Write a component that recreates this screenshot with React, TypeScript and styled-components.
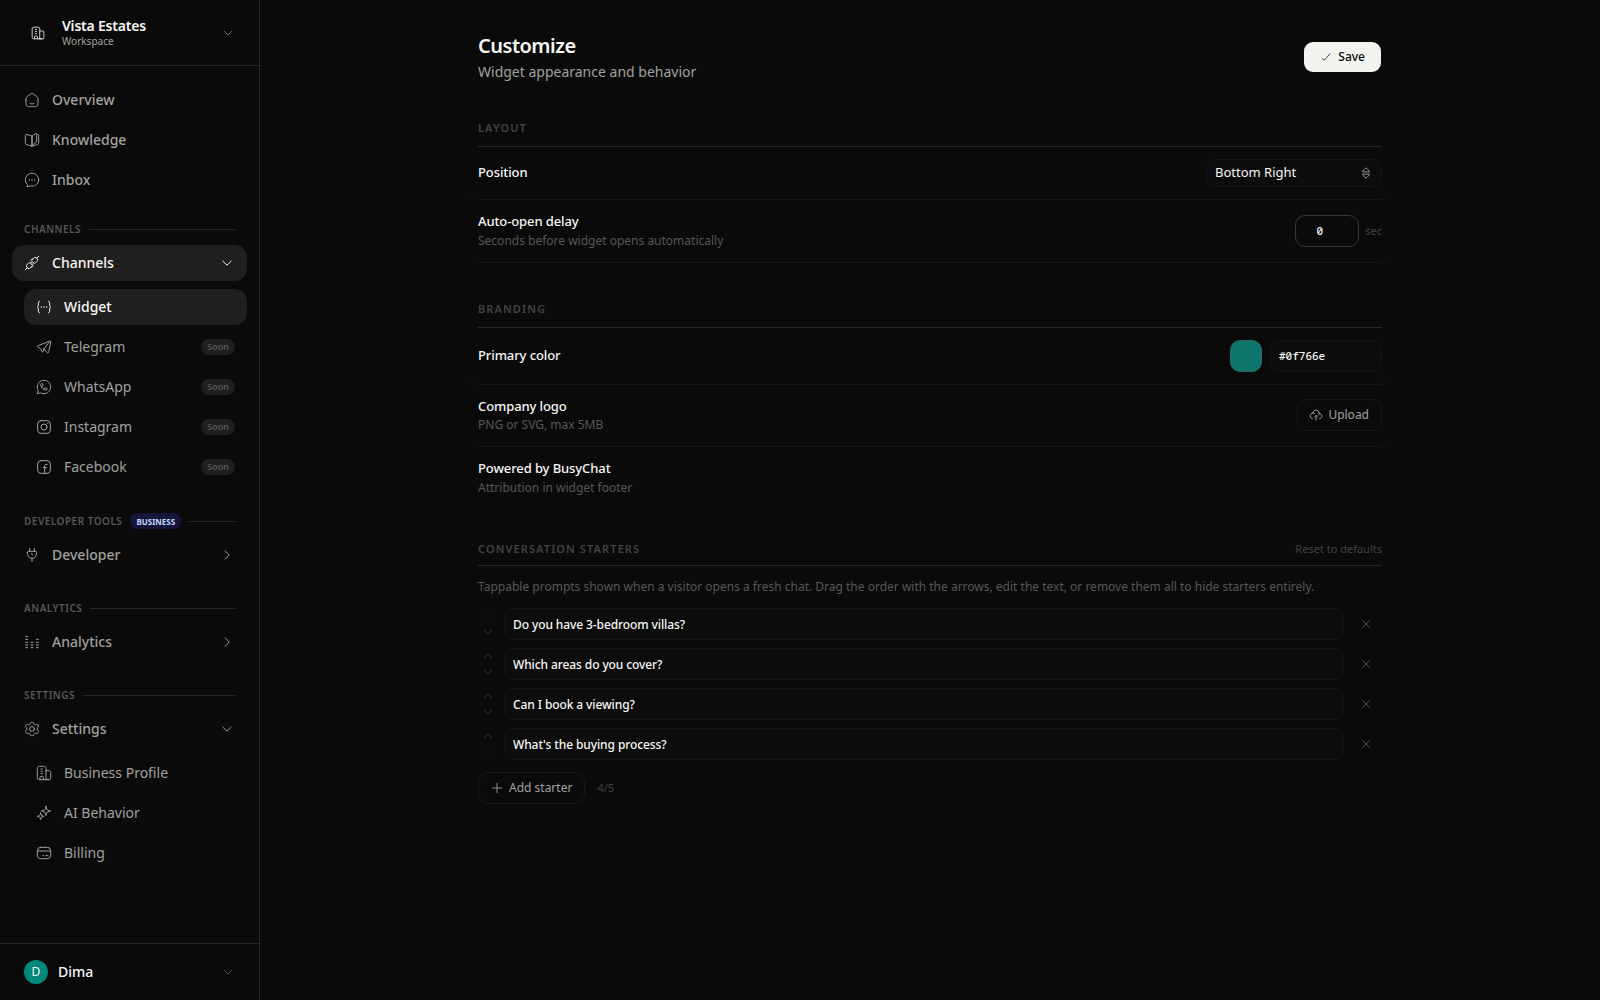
import React from "react";
import styled, { createGlobalStyle, css } from "styled-components";

const c = {
  bg: "#0a0a0a",
  line: "#262626",
  faint: "#141414",
  active: "#1f1f1f",
  text: "#f7f7f4",
  muted: "#a1a19f",
  dim: "#575756",
  dimmer: "#434242",
};

const GlobalStyle = createGlobalStyle`
  *, *::before, *::after { box-sizing: border-box; }
  body {
    margin: 0;
    background: ${c.bg};
    color: ${c.text};
    font-family: "Noto Sans", sans-serif;
  }
  button, input { font: inherit; color: inherit; margin: 0; }
`;

/* ---------- icons ---------- */

const Svg = styled.svg<{ $size: number }>`
  display: block;
  flex: none;
  width: ${(p) => p.$size}px;
  height: ${(p) => p.$size}px;
  fill: none;
  stroke: currentColor;
  stroke-width: 1.5;
  stroke-linecap: round;
  stroke-linejoin: round;
`;

const shapes = {
  home: (
    <>
      <path d="M3 11.99V14.5c0 3.54 0 5.3 1.17 6.4C5.34 22 7.23 22 11 22h2c3.77 0 5.66 0 6.83-1.1C21 19.8 21 18.04 21 14.5v-2.51c0-1.8 0-2.7-.38-3.49-.38-.78-1.09-1.33-2.51-2.44l-2-1.55C13.9 2.84 12.8 2 11.99 2s-1.9.84-4.1 2.51l-2 1.55C4.47 7.17 3.76 7.72 3.38 8.5 3 9.29 3 10.19 3 11.99Z" />
      <path d="M15 17c-.8.62-1.85 1-3 1s-2.2-.38-3-1" />
    </>
  ),
  book: (
    <>
      <path d="M12 6.3v15M5.33 4.03C8.08 4.6 9.86 5.5 12 6.3V21.3c-2.1-.8-4-1.5-6.6-2.05C3.7 18.9 2.9 18.8 2.4 18.1 2 17.5 2 16.8 2 15.3V7c0-1.6 0-2.4.63-2.87.7-.5 1.35-.37 2.7-.1Z" />
      <path d="M12 21.3c2.1-.8 4-1.5 6.6-2.05 1.7-.35 2.5-.45 3-1.15.4-.6.4-1.3.4-2.8V7c0-1.6 0-2.4-.63-2.87-.4-.3-.8-.38-1.37-.33" />
      <path d="M12 6.3c1.2-.5 2.7-2.1 4.6-3.6.9-.7 1.4-1 1.9-.7.5.2.5.8.5 1.8v9.6c0 .9 0 1.4-.2 1.7-.3.4-1.1.7-2.3 1.4-1.6.9-3.5 2.8-4.5 4.5" />
    </>
  ),
  chat: (
    <>
      <path d="M22 11.57c0 5.28-4.48 9.57-10 9.57-.65 0-1.3-.06-1.94-.18-.46-.09-.69-.13-.85-.1-.16.02-.39.14-.84.38a6.6 6.6 0 0 1-4.24.67 5.4 5.4 0 0 0 1.1-2.38c.1-.54-.15-1.06-.53-1.44A9.3 9.3 0 0 1 2 11.57C2 6.29 6.48 2 12 2s10 4.29 10 9.57Z" />
      <path d="M12 12h.01M16 12h.01M8 12h.01" strokeWidth="2" />
    </>
  ),
  building: (
    <>
      <path d="M15 22V7c0-2.360 0-3.540-.730-4.270C13.540 2 12.360 2 10 2H7c-2.360 0-3.540 0-4.270.730C2 3.460 2 4.640 2 7v10c0 2.360 0 3.540.730 4.270C3.460 22 4.640 22 7 22h12" />
      <path d="M15 8.500h3c1.890 0 2.830 0 3.410.590.590.580.590 1.520.590 3.410v5.500c0 1.890 0 2.830-.590 3.410-.580.590-1.520.590-3.410.590h-3" />
      <path d="M7.500 6h2M7.500 9.500h2M7.500 13h2M6 22v-3.500c0-.900.600-1.500 1.500-1.500h2c.900 0 1.500.600 1.500 1.500V22" />
    </>
  ),
  plugs: (
    <>
      <path d="M13.2 6.1c1.6-1.6 2.4-2.4 3.4-2.5 1.3-.1 2.3.9 2.8 1.4.5.5 1.1 1.5 1 2.6-.1 1.1-.9 1.9-2.5 3.5l-1 1c-.6.6-.9.8-1.2.8-.3 0-.6-.2-1.2-.8l-3.2-3.2c-.6-.6-.8-.9-.8-1.2 0-.3.2-.6.8-1.2l1.9-.4Z" />
      <path d="M10.800 17.900c-1.600 1.600-2.400 2.400-3.400 2.500-1.300.100-2.300-.900-2.800-1.400-.500-.500-1.100-1.500-1-2.600.100-1.100.900-1.900 2.500-3.500l1-1c.600-.600.900-.800 1.200-.800.300 0 .600.200 1.200.800l3.200 3.200c.600.600.800.900.800 1.200 0 .300-.200.600-.800 1.200l-1.900.400Z" />
      <path d="M19.300 4.700 22 2M2 22l2.700-2.700M9.500 12.500l1.700-1.700M11.700 14.700l1.700-1.700" />
    </>
  ),
  braces: (
    <>
      <path d="M18.500 20.500c1.500 0 2-1 2-2.500v-3.200c0-1.300.3-2.200 1.500-2.800-1.200-.6-1.500-1.500-1.500-2.800V6c0-1.500-.500-2.500-2-2.500M5.500 20.500c-1.500 0-2-1-2-2.500v-3.200c0-1.300-.3-2.200-1.500-2.800 1.200-.6 1.500-1.500 1.500-2.800V6C3.500 4.500 4 3.500 5.500 3.500" />
      <path d="M8 12h.01M12 12h.01M16 12h.01" strokeWidth="2" />
    </>
  ),
  plane: (
    <path d="m11.990 14.990 2.900 3.400c1.500 1.900 2.300 2.800 3.100 2.500.8-.2 1-1.400 1.500-3.600l2.300-11.200c.3-1.700.5-2.500.1-2.900-.5-.4-1.200-.1-2.700.5L5.140 9.300C2.900 10.200 1.990 10.600 2 11.400c0 .9 1.200 1.200 3.500 1.900.6.200 1 .5 1.500 1.300l1.900 4.300c.4.800.7 1.100 1.200.6l1.890-4.510Zm0 0L20 4.500" />
  ),
  whatsapp: (
    <>
      <path d="M12 22c5.520 0 10-4.480 10-10S17.520 2 12 2 2 6.480 2 12c0 1.380.280 2.690.780 3.880.280.660.420.990.440 1.240.02.250-.06.520-.2 1.060L2 22l3.820-1.020c.540-.140.810-.220 1.060-.200.250.02.580.160 1.240.440 1.190.500 2.500.780 3.880.780Z" />
      <path d="m8.590 12.380.870-1.080c.370-.46.820-.89.860-1.500 0-.15-.1-.85-.31-2.250C9.920 7 9.410 7 8.970 7c-.57 0-.86 0-1.140.13-.36.160-.73.620-.81 1.010-.6.310-.2.520.070.940.410 1.740 1.330 3.460 2.690 4.820 1.360 1.360 3.080 2.290 4.820 2.690.430.090.640.140.940.070.390-.080.850-.45 1.020-.81.130-.28.130-.57.130-1.140 0-.44 0-.95-.55-1.040-1.400-.210-2.100-.310-2.250-.310-.610.040-1.040.490-1.500.860l-1.080.870" />
    </>
  ),
  instagram: (
    <>
      <rect x="2.500" y="2.500" width="19" height="19" rx="5" />
      <circle cx="12" cy="12" r="4.500" />
      <path d="M17.500 6.500h.01" strokeWidth="2" />
    </>
  ),
  facebook: (
    <>
      <rect x="2.500" y="2.500" width="19" height="19" rx="5" />
      <path d="M16.900 8.030h-1.900c-1.100 0-2 .9-2 2V21.500M11 13h5" />
    </>
  ),
  plug: (
    <path d="M8.500 2v4.500M15.500 2v4.500M12 17v5M5 8.500c0-1.400.6-2 2-2h10c1.400 0 2 .6 2 2 0 4.800-2.600 8.500-7 8.500s-7-3.700-7-8.500ZM11 10l2 1.500" />
  ),
  bars: (
    <path d="M2.500 20.500h3M2.500 16.500h3M2.500 12.500h3M2.500 8h3M2.500 3.500h3M10.500 20.500h3M10.500 16.500h3M10.500 12.500h3M18.500 20.500h3M18.500 16.500h3M18.500 12.500h3M18.500 8h3" />
  ),
  gear: (
    <>
      <path d="M21.320 7.140 20.820 6.280c-.37-.65-.56-.98-.88-1.110-.31-.130-.68-.030-1.400.180l-1.220.340a2.100 2.100 0 0 1-1.360-.170l-.34-.190a2 2 0 0 1-.79-.97l-.33-1c-.22-.66-.33-.99-.6-1.180-.26-.190-.6-.190-1.300-.190h-1.110c-.7 0-1.050 0-1.310.190-.26.190-.37.520-.59 1.180l-.34 1a2 2 0 0 1-.79.970l-.34.190c-.42.220-.9.280-1.360.170l-1.220-.34c-.72-.210-1.080-.310-1.400-.180-.310.130-.5.460-.87 1.110l-.5.860c-.35.610-.52.920-.49 1.240.3.320.27.590.73 1.110l1.030 1.150c.25.320.43.880.43 1.380s-.18 1.060-.43 1.380l-1.030 1.150c-.46.520-.7.780-.73 1.110-.3.320.14.630.49 1.240l.5.860c.37.650.56.980.87 1.110.320.130.68.030 1.400-.18l1.220-.34c.46-.110.940-.050 1.360.17l.34.190c.36.240.64.570.79.970l.34 1c.22.660.33.990.59 1.180.26.190.61.190 1.310.190h1.110c.7 0 1.040 0 1.300-.190.27-.19.380-.52.600-1.180l.33-1c.15-.4.430-.73.790-.97l.34-.19c.42-.22.900-.28 1.360-.17l1.220.34c.72.210 1.090.310 1.400.18.320-.13.510-.46.880-1.110l.5-.86c.34-.61.520-.92.480-1.240-.030-.33-.26-.59-.73-1.110l-1.030-1.150c-.25-.32-.43-.88-.43-1.380s.18-1.060.43-1.380l1.030-1.150c.47-.52.700-.79.730-1.110.040-.32-.14-.63-.48-1.240Z" />
      <circle cx="12" cy="12" r="3.500" />
    </>
  ),
  sparkles: (
    <>
      <path d="m15 2 .540 1.980c.480 1.770.720 2.650 1.370 3.300.640.640 1.530.880 3.290 1.360L22 9l-1.980.540c-1.770.480-2.650.720-3.300 1.370-.640.640-.880 1.530-1.360 3.290L15 16l-.540-1.980c-.480-1.770-.720-2.650-1.370-3.300-.640-.640-1.530-.880-3.290-1.360L8 9l1.980-.540c1.770-.480 2.650-.720 3.300-1.370.640-.640.880-1.530 1.360-3.290Z" />
      <path d="m7 12 .390 1.410c.340 1.270.510 1.900.970 2.360.460.460 1.090.630 2.360.980L12 17l-1.410.390c-1.270.340-1.900.510-2.360.970-.460.460-.630 1.090-.980 2.360L7 22l-.390-1.410c-.340-1.270-.510-1.900-.970-2.360-.460-.460-1.090-.630-2.360-.980L2 17l1.410-.390c1.270-.340 1.900-.510 2.360-.970.460-.460.630-1.090.980-2.360Z" />
    </>
  ),
  card: (
    <>
      <rect x="2" y="3.500" width="20" height="17" rx="5" />
      <path d="M10 16h1.500M14.500 16H18M2 9h20" />
    </>
  ),
  down: <path d="M18 9s-4.420 6-6 6-6-6-6-6" />,
  up: <path d="M18 15s-4.420-6-6-6-6 6-6 6" />,
  right: <path d="M9 6s6 4.420 6 6-6 6-6 6" />,
  check: <path d="m4 14.500 4.500 4L20 5.500" />,
  close: <path d="M18 6 6 18M6 6l12 12" />,
  plus: <path d="M12 4v16M4 12h16" />,
  upload: (
    <>
      <path d="M17.480 9.500h.02c2.490 0 4.500 2.020 4.500 4.510 0 2.320-1.750 4.230-4 4.490M17.480 9.500c.01-.160.020-.330.020-.500a5.500 5.500 0 0 0-10.980-.470M17.480 9.500a5.480 5.480 0 0 1-1.240 3M6.520 8.530A5 5 0 0 0 6 18.400M6.520 8.530a5 5 0 0 1 3.170.90" />
      <path d="M12 13v8M12 13c-.700 0-2.010 2-2.500 2.500M12 13c.700 0 2.010 2 2.500 2.500" />
    </>
  ),
  updown: (
    <path d="M18 9.500S14 3.500 12 3.500 6 9.500 6 9.500ZM6 14.500S10 20.500 12 20.500s6-6 6-6Z" />
  ),
};

type IconName = keyof typeof shapes;

function Icon({ name, size = 16 }: { name: IconName; size?: number }) {
  return (
    <Svg $size={size} viewBox="0 0 24 24" aria-hidden="true">
      {shapes[name]}
    </Svg>
  );
}

/* ---------- sidebar ---------- */

const Shell = styled.div`
  display: flex;
  height: 1000px;
  overflow: hidden;
`;

const Sidebar = styled.aside`
  display: flex;
  flex-direction: column;
  flex: none;
  width: 260px;
  border-right: 1px solid ${c.line};
`;

const Workspace = styled.header`
  display: flex;
  align-items: center;
  height: 66px;
  padding: 0 24px;
  border-bottom: 1px solid ${c.line};
`;

const WorkspaceIcon = styled.span`
  display: grid;
  place-items: center;
  width: 28px;
  height: 28px;
  margin-right: 10px;
  color: #f0f0ee;
`;

const WorkspaceText = styled.div`
  flex: 1;
`;

const WorkspaceName = styled.div`
  font-size: 14px;
  font-weight: 600;
  line-height: 18px;
  letter-spacing: -0.015em;
`;

const WorkspaceKind = styled.div`
  font-size: 10px;
  line-height: 13px;
  color: ${c.muted};
`;

const Tone = styled.span<{ $color: string }>`
  display: flex;
  color: ${(p) => p.$color};
`;

const Nav = styled.nav`
  display: flex;
  flex-direction: column;
  flex: 1;
  gap: 4px;
  padding: 16px 12px;
`;

const NavItem = styled.a<{ $active?: boolean; $nested?: boolean }>`
  display: flex;
  align-items: center;
  flex: none;
  gap: 12px;
  height: 36px;
  padding: 0 12px;
  margin-left: ${(p) => (p.$nested ? 12 : 0)}px;
  border-radius: 12px;
  font-size: 14px;
  font-weight: ${(p) => (p.$nested ? 400 : 500)};
  line-height: 20px;
  color: ${c.muted};
  ${(p) =>
    p.$active &&
    css`
      background: ${c.active};
      color: ${c.text};
      font-weight: 500;
    `}
`;

const NavText = styled.span`
  flex: 1;
`;

const SubNav = styled.div`
  display: flex;
  flex-direction: column;
  gap: 4px;
  margin-top: 4px;
`;

const Soon = styled.span`
  display: flex;
  align-items: center;
  height: 16px;
  padding: 0 6px;
  border-radius: 8px;
  background: ${c.active};
  color: ${c.dim};
  font-size: 9px;
  font-weight: 600;
`;

const GroupLabel = styled.div<{ $top: number }>`
  display: flex;
  align-items: center;
  flex: none;
  gap: 8px;
  height: 16px;
  margin: ${(p) => p.$top}px 12px 4px;
  font-size: 10px;
  font-weight: 600;
  letter-spacing: 0.05em;
  text-transform: uppercase;
  color: ${c.dim};
  &::after {
    content: "";
    flex: 1;
    height: 1px;
    background: ${c.line};
  }
`;

const Plan = styled.span`
  display: flex;
  align-items: center;
  height: 16px;
  padding: 0 6px;
  border-radius: 8px;
  background: #15163a;
  color: #bedbff;
  font-size: 8px;
  font-weight: 700;
  letter-spacing: 0;
`;

const Account = styled.footer`
  display: flex;
  align-items: center;
  height: 57px;
  padding: 0 24px;
  border-top: 1px solid ${c.line};
  font-size: 14px;
  font-weight: 500;
  line-height: 20px;
`;

const AccountName = styled.span`
  flex: 1;
  padding-bottom: 1px;
`;

const Avatar = styled.span`
  display: grid;
  place-items: center;
  width: 24px;
  height: 24px;
  margin-right: 10px;
  border-radius: 50%;
  background: #00897b;
  font-size: 12px;
  font-weight: 400;
  line-height: 22px;
`;

/* ---------- main ---------- */

const Main = styled.main`
  flex: 1;
  display: flex;
  justify-content: center;
`;

const Page = styled.div`
  width: 904px;
  padding-top: 32px;
`;

const PageHead = styled.div`
  display: flex;
  align-items: center;
  justify-content: space-between;
  height: 50px;
`;

const Title = styled.h1`
  margin: 0;
  font-size: 20px;
  font-weight: 600;
  line-height: 28px;
  letter-spacing: -0.025em;
`;

const Subtitle = styled.p`
  margin: 2px 0 0;
  font-size: 14px;
  line-height: 20px;
  color: ${c.muted};
`;

const SaveButton = styled.button`
  display: flex;
  align-items: center;
  gap: 6px;
  height: 32px;
  padding: 0 16px;
  border: 1px solid transparent;
  border-radius: 10px;
  background: #f2f2ef;
  background-clip: padding-box;
  color: #0a0a0a;
  font-size: 12px;
  font-weight: 500;
`;

const ButtonText = styled.span<{ $drop?: boolean }>`
  padding-bottom: ${(p) => (p.$drop ? 0 : 2)}px;
`;

const SectionHead = styled.div<{ $top: number; $height: number }>`
  display: flex;
  justify-content: space-between;
  height: ${(p) => p.$height}px;
  margin-top: ${(p) => p.$top}px;
  border-bottom: 1px solid ${c.line};
  line-height: 16px;
`;

const SectionTitle = styled.h2`
  margin: 0;
  font-size: 11px;
  font-weight: 600;
  letter-spacing: 0.1em;
  text-transform: uppercase;
  color: ${c.dimmer};
`;

const Reset = styled.span`
  font-size: 11px;
  color: ${c.dimmer};
`;

const Row = styled.div<{ $height: number; $last?: boolean }>`
  display: flex;
  align-items: center;
  justify-content: space-between;
  height: ${(p) => p.$height}px;
  margin: 0 -8px;
  padding: 0 8px;
  border-bottom: 1px solid ${(p) => (p.$last ? "transparent" : c.faint)};
  border-radius: 10px;
`;

const RowText = styled.div`
  padding-bottom: 2px;
`;

const RowLabel = styled.div`
  font-size: 13px;
  font-weight: 500;
  line-height: 18px;
  letter-spacing: -0.1px;
`;

const RowHint = styled.div<{ $gap: number }>`
  margin-top: ${(p) => p.$gap}px;
  font-size: 12px;
  line-height: 16px;
  color: ${c.dim};
`;

const Controls = styled.div<{ $gap: number }>`
  display: flex;
  align-items: center;
  gap: ${(p) => p.$gap}px;
`;

const field = css`
  border: 1px solid ${c.faint};
  border-radius: 10px;
  background: #0c0c0c;
`;

const Select = styled.div`
  ${field}
  display: flex;
  align-items: center;
  justify-content: space-between;
  width: 176px;
  height: 28px;
  padding: 0 8px;
  font-size: 13px;
`;

const SelectText = styled.span`
  padding-bottom: 3px;
`;

const mono = css`
  font-family: "Noto Sans Mono", "DejaVu Sans Mono", monospace;
  font-size: 11px;
  font-weight: 500;
`;

const DelayInput = styled.input`
  ${mono}
  width: 64px;
  height: 32px;
  padding: 0 23px 2px 8px;
  border: 1px solid #363636;
  border-radius: 10px;
  background: ${c.bg};
  text-align: center;
`;

const Unit = styled.span`
  padding-bottom: 2px;
  font-size: 11px;
  color: ${c.dimmer};
`;

const Swatch = styled.span`
  width: 32px;
  height: 32px;
  border: 1px solid #2a6a68;
  border-radius: 10px;
  background: #0f766e;
`;

const HexInput = styled.input`
  ${mono}
  ${field}
  width: 112px;
  height: 32px;
  padding: 0 8px 2px;
`;

const GhostButton = styled.button<{ $lift?: boolean }>`
  display: flex;
  align-items: center;
  gap: 5px;
  height: 32px;
  margin-bottom: ${(p) => (p.$lift ? 2 : 0)}px;
  padding: 0 12px 0 11px;
  border: 1px solid #171717;
  border-radius: 10px;
  background: transparent;
  color: ${c.muted};
  font-size: 12px;
`;

const Description = styled.p`
  margin: 13px 0 13px;
  font-size: 12px;
  line-height: 16px;
  color: ${c.dim};
`;

const Starters = styled.div`
  display: flex;
  flex-direction: column;
  gap: 8px;
`;

const Starter = styled.div`
  display: flex;
  align-items: center;
  height: 32px;
`;

const Movers = styled.div`
  display: flex;
  flex-direction: column;
  align-items: center;
  gap: 2px;
  width: 20px;
  margin-right: 6px;
`;

const Mover = styled.span<{ $disabled: boolean }>`
  color: ${(p) => (p.$disabled ? "#171717" : "#404040")};
`;

const StarterInput = styled.input`
  ${field}
  flex: 1;
  height: 32px;
  padding: 0 8px;
  font-size: 12px;
  font-weight: 500;
  letter-spacing: -0.1px;
`;

const Remove = styled.span`
  display: grid;
  place-items: center;
  width: 28px;
  margin: 0 2px 0 8px;
  color: #5c5c5c;
`;

const AddRow = styled.div`
  display: flex;
  align-items: center;
  gap: 12px;
  margin-top: 12px;
`;

const channels: { icon: IconName; label: string }[] = [
  { icon: "plane", label: "Telegram" },
  { icon: "whatsapp", label: "WhatsApp" },
  { icon: "instagram", label: "Instagram" },
  { icon: "facebook", label: "Facebook" },
];

const starters = [
  "Do you have 3-bedroom villas?",
  "Which areas do you cover?",
  "Can I book a viewing?",
  "What's the buying process?",
];

export default function App() {
  return (
    <>
      <GlobalStyle />
      <Shell>
        <Sidebar>
          <Workspace>
            <WorkspaceIcon>
              <Icon name="building" size={14} />
            </WorkspaceIcon>
            <WorkspaceText>
              <WorkspaceName>Vista Estates</WorkspaceName>
              <WorkspaceKind>Workspace</WorkspaceKind>
            </WorkspaceText>
            <Tone $color="#8a8a88">
              <Icon name="down" size={14} />
            </Tone>
          </Workspace>
          <Nav>
            <NavItem>
              <Icon name="home" />
              <NavText>Overview</NavText>
            </NavItem>
            <NavItem>
              <Icon name="book" />
              <NavText>Knowledge</NavText>
            </NavItem>
            <NavItem>
              <Icon name="chat" />
              <NavText>Inbox</NavText>
            </NavItem>

            <GroupLabel $top={19}>Channels</GroupLabel>
            <NavItem $active>
              <Icon name="plugs" />
              <NavText>Channels</NavText>
              <Icon name="down" />
            </NavItem>
            <SubNav>
              <NavItem $active $nested>
                <Icon name="braces" />
                <NavText>Widget</NavText>
              </NavItem>
              {channels.map((ch) => (
                <NavItem $nested key={ch.label}>
                  <Icon name={ch.icon} />
                  <NavText>{ch.label}</NavText>
                  <Soon>Soon</Soon>
                </NavItem>
              ))}
            </SubNav>

            <GroupLabel $top={24}>
              Developer Tools <Plan>Business</Plan>
            </GroupLabel>
            <NavItem>
              <Icon name="plug" />
              <NavText>Developer</NavText>
              <Icon name="right" />
            </NavItem>

            <GroupLabel $top={23}>Analytics</GroupLabel>
            <NavItem>
              <Icon name="bars" />
              <NavText>Analytics</NavText>
              <Icon name="right" />
            </NavItem>

            <GroupLabel $top={23}>Settings</GroupLabel>
            <NavItem>
              <Icon name="gear" />
              <NavText>Settings</NavText>
              <Icon name="down" />
            </NavItem>
            <SubNav>
              <NavItem $nested>
                <Icon name="building" />
                <NavText>Business Profile</NavText>
              </NavItem>
              <NavItem $nested>
                <Icon name="sparkles" />
                <NavText>AI Behavior</NavText>
              </NavItem>
              <NavItem $nested>
                <Icon name="card" />
                <NavText>Billing</NavText>
              </NavItem>
            </SubNav>
          </Nav>
          <Account>
            <Avatar>D</Avatar>
            <AccountName>Dima</AccountName>
            <Tone $color="#5a5a5a">
              <Icon name="down" size={14} />
            </Tone>
          </Account>
        </Sidebar>

        <Main>
          <Page>
            <PageHead>
              <div>
                <Title>Customize</Title>
                <Subtitle>Widget appearance and behavior</Subtitle>
              </div>
              <SaveButton>
                <Icon name="check" size={12} />
                <ButtonText>Save</ButtonText>
              </SaveButton>
            </PageHead>

            <SectionHead $top={38} $height={27}>
              <SectionTitle>Layout</SectionTitle>
            </SectionHead>
            <Row $height={53}>
              <RowText>
                <RowLabel>Position</RowLabel>
              </RowText>
              <Select>
                <SelectText>Bottom Right</SelectText>
                <Tone $color={c.muted}>
                  <Icon name="updown" size={14} />
                </Tone>
              </Select>
            </Row>
            <Row $height={63}>
              <RowText>
                <RowLabel>Auto-open delay</RowLabel>
                <RowHint $gap={3}>Seconds before widget opens automatically</RowHint>
              </RowText>
              <Controls $gap={6}>
                <DelayInput defaultValue="0" />
                <Unit>sec</Unit>
              </Controls>
            </Row>

            <SectionHead $top={38} $height={27}>
              <SectionTitle>Branding</SectionTitle>
            </SectionHead>
            <Row $height={57}>
              <RowText>
                <RowLabel>Primary color</RowLabel>
              </RowText>
              <Controls $gap={8}>
                <Swatch />
                <HexInput defaultValue="#0f766e" />
              </Controls>
            </Row>
            <Row $height={62}>
              <RowText>
                <RowLabel>Company logo</RowLabel>
                <RowHint $gap={2}>PNG or SVG, max 5MB</RowHint>
              </RowText>
              <GhostButton $lift>
                <Icon name="upload" size={14} />
                <ButtonText $drop>Upload</ButtonText>
              </GhostButton>
            </Row>
            <Row $height={63} $last>
              <RowText>
                <RowLabel>Powered by BusyChat</RowLabel>
                <RowHint $gap={3}>Attribution in widget footer</RowHint>
              </RowText>
            </Row>

            <SectionHead $top={31} $height={25}>
              <SectionTitle>Conversation starters</SectionTitle>
              <Reset>Reset to defaults</Reset>
            </SectionHead>
            <Description>
              Tappable prompts shown when a visitor opens a fresh chat. Drag the order with the
              arrows, edit the text, or remove them all to hide starters entirely.
            </Description>
            <Starters>
              {starters.map((s, i) => (
                <Starter key={s}>
                  <Movers>
                    <Mover $disabled={i === 0}>
                      <Icon name="up" size={14} />
                    </Mover>
                    <Mover $disabled={i === starters.length - 1}>
                      <Icon name="down" size={14} />
                    </Mover>
                  </Movers>
                  <StarterInput defaultValue={s} />
                  <Remove>
                    <Icon name="close" size={14} />
                  </Remove>
                </Starter>
              ))}
            </Starters>
            <AddRow>
              <GhostButton>
                <Icon name="plus" size={14} />
                <ButtonText>Add starter</ButtonText>
              </GhostButton>
              <Unit>4/5</Unit>
            </AddRow>
          </Page>
        </Main>
      </Shell>
    </>
  );
}
